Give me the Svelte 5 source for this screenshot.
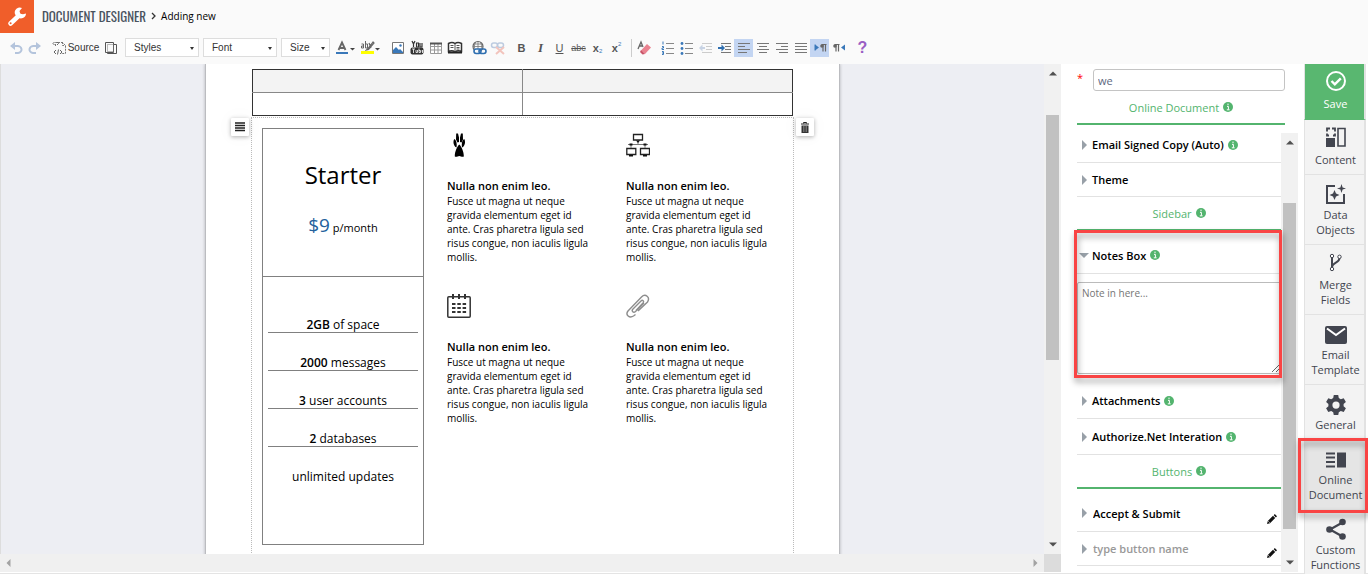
<script lang="ts">
  interface Tool {
    name: string;
    icon: string;
    active?: boolean;
  }

  interface NavItem {
    icon: string;
    lines: string[];
    kind?: 'save' | 'current';
  }

  const ICONS: Record<string, string> = {
    undo: '<path d="M3 6h6a4 3.500 0 0 1 1 7H7" fill="none" stroke="#b4c4dc" stroke-width="2"/><path d="M2 6l5-4v8z" fill="#b4c4dc"/>',
    redo: '<path d="M13 6H7a4 3.500 0 0 0-1 7h3" fill="none" stroke="#b4c4dc" stroke-width="2"/><path d="M14 6L9 2v8z" fill="#b4c4dc"/>',
    source: '<path d="M4.500 6V2.500h7l3 3v8H9.500M11.500 2v3.500h3" fill="none" stroke="#777" stroke-dasharray="2 1"/><path d="M3.500 2L2 3.500 3.500 5M6 2l1.500 1.500L6 5M5 10l-2 2 2 2M9 10l2 2-2 2M7.500 9.500l-1 5" fill="none" stroke="#666"/>',
    newpage: '<path d="M2.500 2.500h8v10h-8zM10.500 4.500h3v9h-9v-1" fill="none" stroke="#555"/><path d="M4.500 4.500h6v7h-6z" fill="none" stroke="#777" stroke-dasharray="1 1"/>',
    textcolor: '<path d="M3.500 10L7 2.500 10.500 10M5 8h4" fill="none" stroke="#666" stroke-width="1.800"/><path d="M1 12h12v2H1z" fill="#3a78b9"/><path d="M15 8h5l-2.500 2.500z" fill="#444"/>',
    marker: '<path d="M1.500 4h2v4h-2V6h2M5.500 1v7h2V4h-2" fill="none" stroke="#666"/><path d="M13 2L7.500 9l-1 1 2-.5L14 3zM9 3l2 5" fill="none" stroke="#666" stroke-width="1.200"/><path d="M1 11h13v3H1z" fill="#ff0"/><path d="M15 8h5l-2.500 2.500z" fill="#444"/>',
    image: '<path d="M2.500 2.500h11v11h-11z" fill="#fff" stroke="#777"/><path d="M3 13v-3l3-3 3 3 1-1 3 3v1z" fill="#3a78b9"/><circle cx="10.500" cy="5.500" r="1.200" fill="#3a78b9"/>',
    youtube: '<path d="M3 1l1.500 3v3M6 1L4.500 4M7.500 3v4h2V3zM11 3v4h2V3" fill="none" stroke="#333" stroke-width="1.200"/><rect x="1.500" y="7.500" width="13" height="7" rx="2" fill="#333"/><path d="M3 9h3M4.500 9v4M7 10v2.500h1.500V10M10 8.500v4h1.500v-2H10M14 11.500h-1v-1h1M13 12.500h1" fill="none" stroke="#fff" stroke-width=".8"/>',
    table: '<path d="M2.500 3.500h11v10h-11zM2.500 6.500h11M2.500 10h11M6.500 4v9M10 4v9" fill="#fff" stroke="#999"/><path d="M2 2.500h12v2H2z" fill="#555"/>',
    book: '<path d="M1.500 3.500C4 2 6 2 8 3.500c2-1.500 4-1.500 6.500 0v8C12 10.500 10 10.500 8 12c-2-1.500-4-1.500-6.500-.5z" fill="#fff" stroke="#333" stroke-width="1.500"/><path d="M8 4v8M3.500 5.500h3M3.500 7.500h3M9.500 5.500h3M9.500 7.500h3M9.500 9h3" stroke="#555"/><path d="M1 12.500h14" stroke="#222" stroke-width="2"/>',
    link: '<circle cx="7" cy="6.500" r="5" fill="none" stroke="#666" stroke-width="1.200"/><path d="M2 6.500h10M7 1.500v10M3 4h8M4.500 2.500c-1.500 3-1.500 5 0 8M9.500 2.500c1.500 3 1.500 4 1 6" fill="none" stroke="#777" stroke-width=".8"/><rect x="3" y="9" width="7" height="4.500" rx="2.200" fill="#fafafa" stroke="#2f6fb0" stroke-width="1.600"/><rect x="8" y="9" width="7" height="4.500" rx="2.200" fill="none" stroke="#2f6fb0" stroke-width="1.600"/>',
    unlink: '<rect x="1.500" y="3" width="6" height="4.500" rx="2.200" fill="none" stroke="#bccbe0" stroke-width="1.500"/><rect x="7.500" y="3" width="6" height="4.500" rx="2.200" fill="none" stroke="#bccbe0" stroke-width="1.500"/><path d="M6 7l8 7M14 7l-8 7" stroke="#f2c4bd" stroke-width="2"/>',
    eraser: '<path d="M2 9l3-7 2 5M3 6h3" fill="none" stroke="#666" stroke-width="1.300"/><path d="M11 4l4 3.500-6 6.500-4-3.500z" fill="#ea8290"/><path d="M5 10l4 4-2.500.5L4 12z" fill="#c95367"/>',
    numlist: '<path d="M3 1.500v3M2 6.500h1.500v1.500H2v1.500h2M2 11.500h1.500v3H2M2 13h1.500" fill="none" stroke="#3a78b9"/><path d="M6 3.500h8M6 8.500h8M6 13.500h8" stroke="#888"/>',
    bullist: '<circle cx="3" cy="3.500" r="1.400" fill="#3a78b9"/><circle cx="3" cy="8.500" r="1.400" fill="#3a78b9"/><circle cx="3" cy="13.500" r="1.400" fill="#3a78b9"/><path d="M6 3.500h8M6 8.500h8M6 13.500h8" stroke="#888"/>',
    outdent: '<path d="M4 3.500h10M8 6.500h6M8 9.500h6M4 12.500h10" stroke="#ccc"/><path d="M7 8H3" stroke="#c8d3e4" stroke-width="2"/><path d="M1 8l3.500-3.500v7z" fill="#c8d3e4"/>',
    indent: '<path d="M4 3.500h10M8 6.500h6M8 9.500h6M4 12.500h10" stroke="#777"/><path d="M1 8h4" stroke="#2f6fb0" stroke-width="2"/><path d="M8 8L4.500 4.500v7z" fill="#2f6fb0"/>',
    left: '<path d="M2 3.500h12M2 6.500h7M2 9.500h12M2 12.500h9" stroke="#777"/>',
    center: '<path d="M2 3.500h12M4 6.500h8M2 9.500h12M4 12.500h8" stroke="#777"/>',
    right: '<path d="M2 3.500h12M7 6.500h7M2 9.500h12M5 12.500h9" stroke="#777"/>',
    justify: '<path d="M2 3.500h12M2 6.500h12M2 9.500h12M2 12.500h12" stroke="#777"/>',
    ltr: '<path d="M3 4.500v6" stroke="#3a78b9"/><path d="M3 4.500l4 3-4 3z" fill="#3a78b9"/><path d="M9.500 4.500h5M11 4v7.500M13.500 4v7.500" stroke="#666" stroke-width="1.200"/><circle cx="10" cy="6" r="1.800" fill="#666"/>',
    rtl: '<path d="M3.500 4.500h5M5 4v7.500M7.500 4v7.500" stroke="#666" stroke-width="1.200"/><circle cx="4" cy="6" r="1.800" fill="#666"/><path d="M14 4.500l-4 3 4 3z" fill="#3a78b9"/>',
    save: '<circle cx="12" cy="11" r="9" fill="none" stroke="#fff" stroke-width="2"/><path d="M7.500 11l3.300 3.300 6-6" fill="none" stroke="#fff" stroke-width="2.400"/>',
    content: '<path d="M3 5.500v-3h3M8 2.500h3v3M11 7.500v2H9M5 9.500H3v-2" fill="none" stroke="#42454f" stroke-width="1.800"/><path d="M2 12h9v9H2z" fill="#42454f"/><path d="M14 2.500h7v17.500h-7z" fill="none" stroke="#42454f" stroke-width="1.600"/>',
    data: '<path d="M11 5H3v17h17v-9" fill="none" stroke="#42454f" stroke-width="2"/><path d="M17.500 3l1.100 3.400L22 7.500l-3.400 1.100-1.100 3.400-1.100-3.400L13 7.500l3.400-1.100zM10.500 9l1.500 3.500 3.500 1.500-3.500 1.500-1.500 3.500L9 15.500 5.500 14 9 12.500z" fill="#42454f"/>',
    merge: '<path d="M8 5v11M15.500 7c0 5-7 4-7.500 9" fill="none" stroke="#42454f" stroke-width="2"/><circle cx="8" cy="5" r="1.700" fill="#fff" stroke="#42454f"/><circle cx="15.500" cy="5.800" r="1.700" fill="#fff" stroke="#42454f"/><circle cx="8" cy="18" r="1.700" fill="#fff" stroke="#42454f"/>',
    email: '<rect x="1" y="5" width="22" height="18" rx="2" fill="#42454f"/><path d="M3 7.500l9 6.500 9-6.500" fill="none" stroke="#fff" stroke-width="2"/>',
    general: '<path d="M9.800 4h4.400l.6 3 2 1.200 2.900-1 2.200 3.800-2.300 2v2.200l2.300 2-2.200 3.800-2.900-1-2 1.200-.6 3H9.800l-.6-3-2-1.200-2.900 1-2.200-3.800 2.300-2V13l-2.300-2 2.200-3.800 2.900 1 2-1.200z" fill="#42454f"/><circle cx="12" cy="14.100" r="3.600" fill="#f3f3f3"/>',
    online: '<path d="M2 7.500h9M2 11.500h9M2 16h9M2 20.500h9" stroke="#42454f" stroke-width="2"/><path d="M13 6.500h9v15h-9z" fill="#42454f"/>',
    share: '<path d="M18.500 6.500L6 13.500l12.500 7" fill="none" stroke="#42454f" stroke-width="2.200"/><circle cx="18.500" cy="6" r="3.300" fill="#42454f"/><circle cx="5.500" cy="13.500" r="3.300" fill="#42454f"/><circle cx="18.500" cy="20.500" r="3.300" fill="#42454f"/>',
    paw: '<path d="M9.200 0.500h1.800l1 4v4.500l-1.500.5-1.500-3zM13 4.500l1-4h1.800l.2 6-1.500 3-1.500-.5z" fill="#000"/><path d="M7.200 6c2 1 3 4 2.300 8.500C6.500 13 5.700 9 7.200 6zM17.300 6c-2 1-3 4-2.300 8.500 3-1.500 3.800-5.500 2.300-8.500zM12.300 11.500c2.200 2 4.700 7.500 4.500 12-1.500 1-3-.5-4.500-.5s-3 1.500-4.500.5c-.2-4.500 2.300-10 4.500-12z" fill="#000"/>',
    network: '<path d="M7.500 1.500h9v5.500h-9zM.8 15.500h9v6h-9zM14.500 15.500h9v6h-9z" fill="none" stroke="#222" stroke-width="1.300"/><path d="M12 8v3M2 11.500h20M5 11.500V15M19 11.500V15" fill="none" stroke="#777" stroke-width="1"/><path d="M10 7.500h4l-2 2.500zM3 22h4v1.500H3zM17 22h4v1.500h-4zM3.500 10.500h3v2h-3zM17.500 10.500h3v2h-3z" fill="#111"/>',
    calendar: '<rect x=".8" y="2.800" width="22.400" height="20.400" rx="1" fill="none" stroke="#333" stroke-width="1.500"/><path d="M6 0v5M12 0v5M18 0v5" stroke="#333" stroke-width="2"/><path d="M5 10h3.500M10.300 10h3.500M15.600 10h3.500M5 14h3.500M10.300 14h3.500M15.600 14h3.500M5 18h3.500M10.300 18h3.500M15.600 18h3.500" stroke="#333" stroke-width="2.200"/>',
    clip: '<path d="M18 9l-8.500 8.500c-2 2-4.500-.5-2.500-2.500l8-8c1.500-1.500 3.500 0 2 2L10 16.500M9.500 20.500l-2 1.500c-4 2.500-8.500-1-5.500-5L15.500 3c4-4 9 .5 6 5l-9.500 9" fill="none" stroke="#8d8d8d" stroke-width="1.400"/>',
  };

  const insertTools: Tool[] = [
    { name: 'Image', icon: 'image' },
    { name: 'YouTube', icon: 'youtube' },
    { name: 'Table', icon: 'table' },
    { name: 'Library', icon: 'book' },
  ];
  const linkTools: Tool[] = [
    { name: 'Link', icon: 'link' },
    { name: 'Unlink', icon: 'unlink' },
  ];
  const paragraphTools: Tool[] = [
    { name: 'Numbered list', icon: 'numlist' },
    { name: 'Bulleted list', icon: 'bullist' },
    { name: 'Outdent', icon: 'outdent' },
    { name: 'Indent', icon: 'indent' },
    { name: 'Align left', icon: 'left', active: true },
    { name: 'Center', icon: 'center' },
    { name: 'Align right', icon: 'right' },
    { name: 'Justify', icon: 'justify' },
    { name: 'Left to right', icon: 'ltr', active: true },
    { name: 'Right to left', icon: 'rtl' },
  ];

  const features = ['paw', 'network', 'calendar', 'clip'];
  const plan = [
    { amount: '2GB', text: 'of space' },
    { amount: '2000', text: 'messages' },
    { amount: '3', text: 'user accounts' },
    { amount: '2', text: 'databases' },
    { amount: '', text: 'unlimited updates' },
  ];

  const nav: NavItem[] = [
    { icon: 'save', lines: ['Save'], kind: 'save' },
    { icon: 'content', lines: ['Content'] },
    { icon: 'data', lines: ['Data', 'Objects'] },
    { icon: 'merge', lines: ['Merge', 'Fields'] },
    { icon: 'email', lines: ['Email', 'Template'] },
    { icon: 'general', lines: ['General'] },
    { icon: 'online', lines: ['Online', 'Document'], kind: 'current' },
    { icon: 'share', lines: ['Custom', 'Functions'] },
  ];

  let docName = $state('we');
  let note = $state('');
  let acceptLabel = $state('Accept & Submit');
  let extraLabel = $state('');
  let notesOpen = $state(true);
</script>

{#snippet toolButtons(tools: Tool[])}
  <div class="group">
    {#each tools as t}
      <button class="tool" class:active={t.active} type="button" aria-label={t.name}>
        <svg width="16" height="16" viewBox="0 0 16 16">{@html ICONS[t.icon]}</svg>
      </button>
    {/each}
  </div>
{/snippet}

{#snippet info()}
  <svg class="info" width="10" height="10" viewBox="0 0 10 10">
    <circle cx="5" cy="5" r="5" fill="#53b46e" />
    <path d="M5 1.600v1.600M4 4.400h1.400v3.200M3.800 7.800h2.800" fill="none" stroke="#fff" stroke-width="1" />
  </svg>
{/snippet}

{#snippet caret(open: boolean)}
  <svg class="caret" width="10" height="12" viewBox="0 0 10 12">
    {#if open}
      <path d="M0 4h10L5 9z" fill="#98a0a8" />
    {:else}
      <path d="M3 1l5 5-5 5z" fill="#98a0a8" />
    {/if}
  </svg>
{/snippet}

{#snippet pencil()}
  <button class="edit" type="button" aria-label="Edit">
    <svg width="10" height="10" viewBox="0 0 10 10">
      <path d="M0 10l.8-3L6 1.800 8.200 4 3 9.200zM6.700 1.200L7.800 0 10 2.200 8.900 3.400z" fill="#111" />
      <path d="M1.500 7.500l1 1" stroke="#fff" />
    </svg>
  </button>
{/snippet}

<div class="app">
  <header>
    <a class="logo" href="#home" aria-label="Home">
      <svg width="22" height="22" viewBox="0 0 22 22">
        <path d="M4.500 17.500L13 9.500" stroke="#fff" stroke-width="4.600" stroke-linecap="round" />
        <path d="M20 7.500a5 5 0 0 1-8.500 3.500 5 5 0 0 1 4.500-9l-2.500 3 .8 2.700 2.700.5z" fill="#fff" />
        <circle cx="4.600" cy="17.300" r="1" fill="#f05e2a" />
      </svg>
    </a>
    <nav class="crumbs">
      <a class="crumb-root" href="#designer">DOCUMENT DESIGNER</a>
      <svg width="5" height="8" viewBox="0 0 5 8"><path d="M1 1l3 3-3 3" fill="none" stroke="#333" stroke-width="1.300" /></svg>
      <span>Adding new</span>
    </nav>
  </header>

  <div class="toolbar" role="toolbar">
    {@render toolButtons([{ name: 'Undo', icon: 'undo' }, { name: 'Redo', icon: 'redo' }])}
    <div class="group">
      <button class="tool source" type="button">
        <svg width="16" height="16" viewBox="0 0 16 16">{@html ICONS.source}</svg>Source
      </button>
      <button class="tool" type="button" aria-label="New page">
        <svg width="16" height="16" viewBox="0 0 16 16">{@html ICONS.newpage}</svg>
      </button>
    </div>
    <div class="group combos">
      <label class="combo"><select aria-label="Styles"><option>Styles</option></select></label>
      <label class="combo"><select aria-label="Font"><option>Font</option></select></label>
      <label class="combo small"><select aria-label="Size"><option>Size</option></select></label>
    </div>
    <div class="group">
      <button class="tool drop" type="button" aria-label="Text color">
        <svg width="21" height="16" viewBox="0 0 21 16">{@html ICONS.textcolor}</svg>
      </button>
      <button class="tool drop" type="button" aria-label="Background color">
        <svg width="21" height="16" viewBox="0 0 21 16">{@html ICONS.marker}</svg>
      </button>
    </div>
    {@render toolButtons(insertTools)}
    {@render toolButtons(linkTools)}
    <div class="group">
      <button class="tool glyph" type="button"><b>B</b></button>
      <button class="tool glyph serif" type="button"><i>I</i></button>
      <button class="tool glyph" type="button"><u>U</u></button>
      <button class="tool glyph abc" type="button"><s>abc</s></button>
      <button class="tool glyph" type="button"><b>x</b><sub>2</sub></button>
      <button class="tool glyph" type="button"><b>x</b><sup>2</sup></button>
    </div>
    <div class="group split">
      <button class="tool" type="button" aria-label="Remove format">
        <svg width="16" height="16" viewBox="0 0 16 16">{@html ICONS.eraser}</svg>
      </button>
    </div>
    {@render toolButtons(paragraphTools)}
    <div class="group">
      <button class="tool help" type="button">?</button>
    </div>
  </div>

  <main>
    <section class="canvas-area">
      <div class="canvas">
        <article class="page">
          <table>
            <tbody>
              <tr class="head"><td></td><td></td></tr>
              <tr><td></td><td></td></tr>
            </tbody>
          </table>

          <div class="block">
            <button class="handle move" type="button" aria-label="Move block">
              <svg width="10" height="10" viewBox="0 0 10 10"><path d="M0 1h10M0 3.500h10M0 6h10M0 8.500h10" stroke="#222" stroke-width="1.500" /></svg>
            </button>
            <button class="handle remove" type="button" aria-label="Delete block">
              <svg width="10" height="11" viewBox="0 0 10 11">
                <path d="M1 2h8M3.500 1.500V.5h3v1" fill="none" stroke="#222" />
                <path d="M1.500 3.500h7V11h-7z" fill="#333" /><path d="M3.500 4v6M5 4v6M6.500 4v6" stroke="#999" stroke-width=".6" />
              </svg>
            </button>

            <div class="card">
              <div class="card-top">
                <h2>Starter</h2>
                <p><span class="price">$9</span> p/month</p>
              </div>
              <ul>
                {#each plan as row}
                  <li>{#if row.amount}<b>{row.amount}</b>{' '}{/if}{row.text}</li>
                {/each}
              </ul>
            </div>

            <div class="features">
              {#each features as icon}
                <div class="feature">
                  <svg width="24" height="24" viewBox="0 0 24 24">{@html ICONS[icon]}</svg>
                  <h3>Nulla non enim leo.</h3>
                  <p>Fusce ut magna ut neque gravida elementum eget id ante. Cras pharetra ligula sed risus congue, non iaculis ligula mollis.</p>
                </div>
              {/each}
            </div>
          </div>
        </article>
      </div>
      <div class="vbar doc-bar">
        <svg width="8" height="5" viewBox="0 0 8 5"><path d="M0 4.500h8L4 .5z" fill="#505050" /></svg>
        <div class="rail"><div class="thumb"></div></div>
        <svg width="8" height="5" viewBox="0 0 8 5"><path d="M0 .5h8l-4 4z" fill="#505050" /></svg>
      </div>
      <div class="hbar">
        <svg width="5" height="8" viewBox="0 0 5 8"><path d="M4.500 0v8L.5 4z" fill="#a3a3a3" /></svg>
        <svg width="5" height="8" viewBox="0 0 5 8"><path d="M.5 0v8l4-4z" fill="#a3a3a3" /></svg>
      </div>
      <div class="corner"></div>
    </section>

    <aside class="panel">
      <div class="panel-head">
        <label class="name-row">
          <span class="required">*</span>
          <input type="text" aria-label="Name" bind:value={docName} />
        </label>
        <div class="heading">Online Document {@render info()}</div>
      </div>

      <div class="scroller">
        <div class="list">
          <div class="row"><button type="button">{@render caret(false)}Email Signed Copy (Auto)</button>{@render info()}</div>
          <div class="row short"><button type="button">{@render caret(false)}Theme</button></div>
          <div class="heading">Sidebar {@render info()}</div>
          <div class="notes">
            <div class="row lead">
              <button type="button" onclick={() => (notesOpen = !notesOpen)}>{@render caret(notesOpen)}Notes Box</button>{@render info()}
            </div>
            {#if notesOpen}
              <textarea aria-label="Notes Box" placeholder="Note in here..." bind:value={note}></textarea>
            {/if}
          </div>
          <div class="row"><button type="button">{@render caret(false)}Attachments</button>{@render info()}</div>
          <div class="row"><button type="button">{@render caret(false)}Authorize.Net Interation</button>{@render info()}</div>
          <div class="heading">Buttons {@render info()}</div>
          <div class="row lead">
            {@render caret(false)}
            <input type="text" aria-label="Accept button name" bind:value={acceptLabel} />
            {@render pencil()}
          </div>
          <div class="row short">
            {@render caret(false)}
            <input type="text" aria-label="Button name" placeholder="type button name" bind:value={extraLabel} />
            {@render pencil()}
          </div>
        </div>
        <div class="vbar list-bar">
          <svg width="8" height="5" viewBox="0 0 8 5"><path d="M0 4.500h8L4 .5z" fill="#505050" /></svg>
          <div class="rail"><div class="thumb"></div></div>
          <svg width="8" height="5" viewBox="0 0 8 5"><path d="M0 .5h8l-4 4z" fill="#505050" /></svg>
        </div>
      </div>
    </aside>

    <nav class="side">
      {#each nav as item}
        <button class="side-item {item.kind ?? ''}" type="button">
          <svg width="24" height="24" viewBox="0 0 24 24">{@html ICONS[item.icon]}</svg>
          {#each item.lines as line}<span>{line}</span>{/each}
        </button>
      {/each}
    </nav>
  </main>
</div>

<style>
  :global(body) { background: #fff; }

  .app {
    height: 100vh;
    display: flex;
    flex-direction: column;
    overflow: hidden;
    font-family: "Open Sans", "Liberation Sans", sans-serif;
    font-size: 11px;
    color: #000;
  }
  .app *, .app *::before, .app *::after { box-sizing: border-box; }

  button, input, select, textarea { font: inherit; color: inherit; margin: 0; }
  button { background: none; border: 0; padding: 0; cursor: pointer; }
  svg { display: block; flex-shrink: 0; }
  h2, h3, p, ul { margin: 0; padding: 0; font-weight: 400; }

  /* header */
  header { display: flex; height: 33px; background: #fafafa; flex-shrink: 0; }
  .logo {
    width: 34px;
    background: #f05e2a;
    display: flex;
    align-items: center;
    justify-content: center;
  }
  .crumbs {
    display: flex;
    align-items: center;
    gap: 5px;
    height: 31px;
    padding-left: 8px;
    font-size: 10px;
  }
  .crumb-root {
    font-family: Oswald, "Roboto Condensed", Roboto, sans-serif;
    font-size: 13px;
    color: #48525e;
    text-decoration: none;
  }

  /* editor toolbar */
  .toolbar {
    display: flex;
    align-items: center;
    gap: 5px;
    height: 31px;
    padding: 0 6px 2px;
    background: #fafafa;
    flex-shrink: 0;
    font-family: "Liberation Sans", sans-serif;
    font-size: 10px;
  }
  .group { display: flex; align-items: center; }
  .tool { width: 19px; height: 18px; display: flex; align-items: center; justify-content: center; }
  .tool.active { background: #c3d5f2; }
  .source { width: 52px; gap: 1px; color: #333; }
  .drop { width: 25px; }
  .glyph { color: #555; font-size: 11px; }
  .serif { font-family: "Liberation Serif", serif; font-size: 13px; font-weight: 700; }
  .abc { font-size: 9px; }
  .glyph sub, .glyph sup { font-size: 6px; line-height: 7px; color: #3a78b9; }
  .glyph sub { align-self: flex-end; padding-bottom: 2px; }
  .glyph sup { align-self: flex-start; padding-top: 2px; }
  .help { color: #9a5fc4; font-size: 16px; font-weight: 700; }
  .split { border-left: 1px solid #ccc; padding-left: 2px; }
  .combos { gap: 4px; margin-right: -2px; }
  .combo { position: relative; width: 74px; }
  .combo.small { width: 49px; }
  .combo select {
    display: block;
    width: 100%;
    height: 19px;
    padding: 0 8px;
    appearance: none;
    background: #fff;
    border: 1px solid #ddd;
    border-radius: 0;
    color: #333;
  }
  .combo::after {
    content: '';
    position: absolute;
    right: 5px;
    top: 9px;
    border: 2px solid transparent;
    border-top: 3px solid #333;
    pointer-events: none;
  }

  main {
    flex: 1;
    min-height: 0;
    display: flex;
    padding-bottom: 1px;
    border-bottom: 1px solid #e4e4e4;
  }

  /* document canvas */
  .canvas-area {
    flex: 1;
    min-width: 0;
    display: grid;
    grid-template-columns: minmax(0, 1fr) 17px;
    grid-template-rows: minmax(0, 1fr) 18px;
  }
  .canvas {
    overflow: hidden;
    background: #edeef3;
    border-left: 1px solid #ddd;
    display: flex;
    justify-content: center;
  }
  .page {
    width: 635px;
    flex-shrink: 0;
    min-height: 600px;
    padding: 5px 46px;
    background: #fff;
    border: solid #bbbcc0;
    border-width: 0 1px;
    box-shadow: 0 0 3px rgba(0, 0, 0, 0.25);
  }
  table { width: 100%; border-collapse: collapse; border: 1px solid #333; }
  td { width: 50%; height: 23px; padding: 0; border: 1px solid #888; }
  tr:first-child td { border-top-color: #333; }
  tr:last-child td { border-bottom-color: #333; }
  td:first-child { border-left-color: #333; }
  td:last-child { border-right-color: #333; }
  .head td { background: #f3f3f3; }

  .block {
    position: relative;
    display: flex;
    gap: 23px;
    margin: 1px -1px 0;
    padding: 10px;
    min-height: 480px;
    border: 1px dotted #bbb;
  }
  .handle {
    position: absolute;
    top: 0;
    width: 18px;
    height: 18px;
    display: flex;
    align-items: center;
    justify-content: center;
    background: #fff;
    border-radius: 1px;
    box-shadow: 0 1px 4px rgba(0, 0, 0, 0.3), 0 0 20px rgba(0, 0, 0, 0.04);
  }
  .move { left: -21px; }
  .remove { right: -21px; }

  .card { width: 162px; height: 417px; border: 1px solid #808080; text-align: center; }
  .card-top { height: 148px; padding-top: 29px; border-bottom: 1px solid #808080; }
  .card h2 { font-size: 24px; line-height: 34px; font-weight: 500; }
  .card p { margin-top: 19px; line-height: 28px; }
  .price { font-size: 19px; color: #23619c; }
  ul { list-style: none; padding: 18px 5px 0; font-size: 12px; }
  li { padding-top: 22px; line-height: 15px; border-bottom: 1px solid #808080; }
  li:last-child { border: 0; }
  li b { font-weight: 600; }

  .features {
    flex: 1;
    display: grid;
    grid-template-columns: repeat(2, 148px);
    grid-auto-rows: 161px;
    column-gap: 31px;
    padding-top: 5px;
  }
  .feature h3 { margin-top: 21px; font-size: 11px; font-weight: 600; line-height: 16px; }
  .feature p { font-size: 10px; line-height: 14px; }

  /* scrollbars */
  .vbar {
    width: 17px;
    display: flex;
    flex-direction: column;
    align-items: center;
    padding: 7px 0;
    background: #f1f1f1;
    flex-shrink: 0;
  }
  .rail { flex: 1; width: 13px; margin: 4px 0; }
  .thumb { background: #c1c1c1; }
  .doc-bar .thumb { margin-top: 35px; height: 245px; }
  .list-bar { margin-top: 6px; }
  .list-bar .thumb { margin-top: 54px; height: 326px; }
  .hbar {
    display: flex;
    align-items: center;
    justify-content: space-between;
    padding: 0 6px;
    background: #f0f0f0;
  }
  .corner { background: #dcdcdc; }

  /* settings panel */
  .panel { width: 243px; flex-shrink: 0; display: flex; flex-direction: column; background: #fff; }
  .panel-head { padding: 5px 19px 0 16px; }
  .name-row { display: flex; }
  .required { width: 16px; color: #f00; line-height: 18px; }
  .name-row input {
    flex: 1;
    min-width: 0;
    height: 22px;
    padding: 0 4px;
    border: 1px solid #c4c4c4;
    border-radius: 3px;
    color: #5d6780;
  }
  .heading {
    display: flex;
    align-items: center;
    justify-content: center;
    gap: 4px;
    height: 34px;
    border-bottom: 2px solid #53b46e;
    color: #53b46e;
  }
  .scroller { flex: 1; min-height: 0; display: flex; padding: 2px 6px 0 0; overflow: hidden; }
  .list { flex: 1; min-width: 0; padding-left: 16px; }
  .row {
    display: flex;
    align-items: center;
    height: 36px;
    gap: 4px;
    padding-left: 2px;
    border-bottom: 1px solid #e2e2e2;
    font-weight: 600;
  }
  .row.short { height: 34px; }
  .row.lead { height: 43px; padding-top: 6px; }
  .row > button:first-child { display: flex; align-items: center; gap: 3px; }
  .row input { flex: 1; min-width: 0; border: 0; padding: 0; background: none; outline: none; }
  .row input::placeholder { color: #999; opacity: 1; }
  .row .edit { align-self: flex-end; padding: 0 4px 7px; }

  .notes { position: relative; padding-bottom: 9px; }
  .notes::after {
    content: '';
    position: absolute;
    z-index: 1;
    inset: -1px -1px 5px -3px;
    border: 3px solid #f94444;
    filter: drop-shadow(1px 4px 3px rgba(0, 0, 0, 0.4));
    pointer-events: none;
  }
  textarea {
    display: block;
    width: 100%;
    height: 92px;
    margin-top: 8px;
    padding: 3px 4px;
    border: 1px solid #bbb;
    border-radius: 2px;
    font-size: 10px;
    resize: vertical;
  }
  textarea::placeholder { color: #757575; opacity: 1; }

  /* right navigation */
  .side { width: 64px; flex-shrink: 0; padding-right: 2px; }
  .side-item {
    position: relative;
    display: flex;
    flex-direction: column;
    align-items: center;
    gap: 1px;
    width: 100%;
    padding: 6px 0 7px 2px;
    background: #f3f3f3;
    border: solid #e2e2e2;
    border-width: 0 2px 1px 1px;
    color: #42454f;
    line-height: 14px;
  }
  .side-item svg { margin-bottom: 2px; }
  .side-item.save { padding-bottom: 8px; background: #59b770; color: #fff; border-bottom-color: #59b770; }
  .side-item.current { background: #e5e5e5; }
  .current::after {
    content: '';
    position: absolute;
    z-index: 1;
    inset: -2px -4px -4px -7px;
    border: 3px solid #f94444;
    filter: drop-shadow(1px 4px 3px rgba(0, 0, 0, 0.4));
    pointer-events: none;
  }
</style>
